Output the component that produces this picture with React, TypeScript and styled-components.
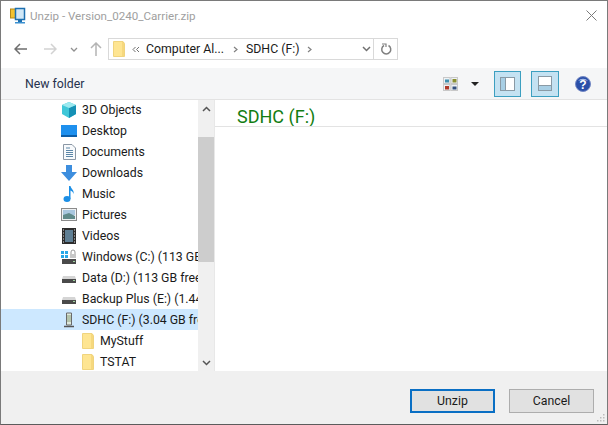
import styled, { createGlobalStyle } from "styled-components";

const Global = createGlobalStyle`
  html, body { margin: 0; padding: 0; background: #fff; }
  * { box-sizing: border-box; }
`;
const Dialog = styled.div`
  position: relative;
  width: 608px;
  height: 425px;
  display: flex;
  flex-direction: column;
  background: #fff;
  border: 1px solid #7a7a7a;
  border-bottom-color: #5c5c5c;
  font-family: "Roboto", sans-serif;
  font-size: 12.3px;
  color: #1a1a1a;
  overflow: hidden;
`;
const TitleBar = styled.div`
  height: 29px;
  flex: none;
  display: flex;
  align-items: center;
  padding: 0 10px 0 9px;
  gap: 4px;
`;
const TitleText = styled.span`
  flex: 1;
  color: #a0a0a0;
  font-size: 11.6px;
`;
const AddressRow = styled.div`
  height: 38px;
  flex: none;
  display: flex;
  align-items: center;
  padding-left: 10px;
`;
const NavButton = styled.div<{ $w: number; $ml?: number }>`
  width: ${(p) => p.$w}px;
  margin-left: ${(p) => p.$ml ?? 0}px;
  height: 22px;
  display: flex;
  align-items: center;
  justify-content: center;
  flex: none;
`;
const AddressBox = styled.div`
  width: 290px;
  height: 22px;
  margin-left: 3px;
  border: 1px solid #d9d9d9;
  display: flex;
  align-items: center;
  padding-left: 4px;
`;
const Crumb = styled.span<{ $ml: number }>`
  margin-left: ${(p) => p.$ml}px;
  white-space: nowrap;
  display: inline-flex;
  align-items: center;
`;
const AddressEnd = styled.div`
  margin-left: auto;
  display: flex;
  align-items: center;
  gap: 2px;
  height: 100%;
`;
const RefreshBox = styled.div`
  width: 24px;
  height: 20px;
  border-left: 1px solid #d9d9d9;
  display: flex;
  align-items: center;
  justify-content: center;
`;
const Toolbar = styled.div`
  height: 32px;
  flex: none;
  display: flex;
  align-items: center;
  background: #f5f6f7;
  border-bottom: 1px solid #e3e3e3;
  padding-left: 24px;
`;
const NewFolder = styled.span`
  color: #26324d;
  flex: 1;
`;
const ToggleButton = styled.div<{ $ml: number; $w: number }>`
  width: ${(p) => p.$w}px;
  height: 26px;
  margin-left: ${(p) => p.$ml}px;
  background: #c4e2f2;
  border: 1px solid #3c9fc0;
  display: flex;
  align-items: center;
  justify-content: center;
`;
const IconSlot = styled.div<{ $ml: number; $mr?: number }>`
  margin-left: ${(p) => p.$ml}px;
  margin-right: ${(p) => p.$mr ?? 0}px;
  display: flex;
  align-items: center;
`;
const Main = styled.div`
  flex: 1;
  display: flex;
  min-height: 0;
`;
const Tree = styled.div`
  width: 197px;
  flex: none;
  overflow: hidden;
`;
const TreeList = styled.div`
  margin-top: -1px;
`;
const TreeRow = styled.div<{ $selected?: boolean; $nested?: boolean }>`
  height: 21px;
  display: flex;
  align-items: center;
  padding-left: ${(p) => (p.$nested ? 79 : 60)}px;
  gap: ${(p) => (p.$nested ? 4 : 5)}px;
  background: ${(p) => (p.$selected ? "#cde8ff" : "transparent")};
  white-space: nowrap;
  overflow: hidden;
`;
const TreeIcon = styled.span`
  width: 16px;
  height: 16px;
  flex: none;
  display: flex;
  align-items: center;
  justify-content: center;
`;
const Scrollbar = styled.div`
  width: 16px;
  flex: none;
  display: flex;
  flex-direction: column;
  background: #f0f0f0;
`;
const ScrollArrow = styled.div`
  height: 17px;
  flex: none;
  display: flex;
  align-items: center;
  justify-content: center;
`;
const ScrollThumb = styled.div`
  height: 125px;
  margin-top: 20px;
  flex: none;
  background: #cdcdcd;
`;
const ScrollTrack = styled.div`
  flex: 1;
`;
const Content = styled.div`
  flex: 1;
  border-left: 1px solid #e8e8e8;
`;
const Heading = styled.div`
  height: 27px;
  padding: 5px 0 0 22px;
  color: #127d12;
  font-size: 18px;
  line-height: 24px;
  border-bottom: 1px solid #e3e3e3;
  overflow: hidden;
`;
const Footer = styled.div`
  height: 53px;
  flex: none;
  background: #f0f0f0;
  display: flex;
  justify-content: flex-end;
  align-items: flex-start;
  padding: 18px 13px 0 0;
  gap: 14px;
`;
const DialogButton = styled.div<{ $primary?: boolean }>`
  width: 85px;
  height: 24px;
  display: flex;
  align-items: center;
  justify-content: center;
  background: #e1e1e1;
  border: ${(p) => (p.$primary ? "2px solid #0a6fc4" : "1px solid #adadad")};
  color: #1a1a1a;
`;
const Grip = styled.div`
  position: absolute;
  right: 2px;
  bottom: 2px;
  line-height: 0;
`;

const Folder = ({ w = 12, h = 16 }: { w?: number; h?: number }) => (
  <svg width={w} height={h} viewBox="0 0 12 16">
    <path d="M0.5 0.5H10L11.5 2.500V15.5H0.5Z" fill="#fee592" stroke="#f0d47e" />
    <path d="M10 1V15" stroke="#eecb6a" />
  </svg>
);
const Drive = () => (
  <svg width="16" height="16" viewBox="0 0 16 16">
    <path d="M2 6H14L15 9H1Z" fill="#d5d5d5" />
    <rect x="1" y="9" width="14" height="4" fill="#4a4a4a" />
    <rect x="12" y="10" width="2" height="1" fill="#9fd29f" />
  </svg>
);
const CrumbArrow = () => (
  <svg width="5" height="7" viewBox="0 0 5 7">
    <path d="M1 1L4 3.500L1 6" stroke="#808080" strokeWidth="1.200" fill="none" />
  </svg>
);

const items = [
  {
    label: "3D Objects",
    icon: (
      <svg width="16" height="16" viewBox="0 0 16 16">
        <path d="M8 0L15 3V12L8 16L1 12V3Z" fill="#3fc7d8" />
        <path d="M8 6L15 3V12L8 16Z" fill="#1590b5" />
        <path d="M8 0L15 3L8 6L1 3Z" fill="#9ce9ef" />
      </svg>
    ),
  },
  {
    label: "Desktop",
    icon: (
      <svg width="16" height="12" viewBox="0 0 16 12">
        <rect width="16" height="12" fill="#1e90ee" />
        <rect y="10" width="16" height="2" fill="#0c5ea8" />
      </svg>
    ),
  },
  {
    label: "Documents",
    icon: (
      <svg width="13" height="16" viewBox="0 0 13 16">
        <path d="M.5.5H9L12.5 4V15.5H.5Z" fill="#f8fafc" stroke="#8a97a5" />
        <path d="M3 4H7M3 6.500H10M3 8.500H10M3 10.500H10M3 12.500H10" stroke="#5c87a8" />
      </svg>
    ),
  },
  {
    label: "Downloads",
    icon: (
      <svg width="16" height="16" viewBox="0 0 16 16">
        <path d="M5 0H11V7H16L8 16L0 7H5Z" fill="#3d8ede" />
      </svg>
    ),
  },
  {
    label: "Music",
    icon: (
      <svg width="12" height="16" viewBox="0 0 12 16">
        <ellipse cx="4" cy="13" rx="3.500" ry="3" fill="#1c8fe6" />
        <path d="M6 0H7.500C8 3 11.500 4 10.500 8C10 5.500 8.500 5 7.500 4.500V13H6Z" fill="#1c8fe6" />
      </svg>
    ),
  },
  {
    label: "Pictures",
    icon: (
      <svg width="16" height="13" viewBox="0 0 16 13">
        <rect x=".5" y=".5" width="15" height="12" fill="#eef1f3" stroke="#8b8b8b" />
        <rect x="2" y="2" width="12" height="5" fill="#a9c7df" />
        <path d="M2 7L8 5L14 8V11H2Z" fill="#5f8a8a" />
      </svg>
    ),
  },
  {
    label: "Videos",
    icon: (
      <svg width="14" height="16" viewBox="0 0 14 16">
        <rect width="14" height="16" fill="#2c2c2c" />
        <rect x="3" y="2" width="8" height="12" fill="#5f7f94" />
        <path d="M1 2H2M1 5H2M1 8H2M1 11H2M1 14H2M12 2H13M12 5H13M12 8H13M12 11H13M12 14H13" stroke="#ddd" />
      </svg>
    ),
  },
  {
    label: "Windows (C:) (113 GB free of 237 GB)",
    icon: (
      <svg width="16" height="16" viewBox="0 0 16 16">
        <path d="M0 2H3V5H0ZM4 2H7V5H4ZM0 6H3V9H0ZM4 6H7V9H4Z" fill="#29a8e8" />
        <path d="M10 5V3A2 2 0 0 1 14 3V5" fill="none" stroke="#999" />
        <rect x="9" y="5" width="6" height="4" fill="#c7c7c7" />
        <rect x="1" y="10" width="14" height="5" fill="#4a4a4a" />
        <rect x="12" y="12" width="2" height="1" fill="#9fd29f" />
      </svg>
    ),
  },
  { label: "Data (D:) (113 GB free of 119 GB)", icon: <Drive /> },
  { label: "Backup Plus (E:) (1.44 TB free of 1.81 TB)", icon: <Drive /> },
  {
    label: "SDHC (F:) (3.04 GB free of 3.68 GB)",
    selected: true,
    icon: (
      <svg width="12" height="16" viewBox="0 0 12 16">
        <path d="M3.500 1H8.500V13H3.500Z" fill="#dfe8dc" stroke="#6a6a6a" />
        <path d="M5 3V10M7 3V10" stroke="#8aa07d" />
        <path d="M1 14.500H11" stroke="#555" strokeWidth="1.500" />
      </svg>
    ),
  },
  { label: "MyStuff", nested: true, icon: <Folder /> },
  { label: "TSTAT", nested: true, icon: <Folder /> },
];

const App = () => {
  return (
    <Dialog>
      <Global />
      <TitleBar>
        <svg width="16" height="17" viewBox="0 0 16 17">
          <rect x="0.500" y="2" width="11" height="9" fill="#f2c230" stroke="#b58a1a" />
          <rect x="5.500" y="1.500" width="9" height="11" fill="#cfe7f7" stroke="#1c6fb0" strokeWidth="1.500" />
          <rect x="8" y="13" width="4" height="2" fill="#1c6fb0" />
          <rect x="5" y="15" width="10" height="1.500" fill="#3b90d0" />
        </svg>
        <TitleText>Unzip - Version_0240_Carrier.zip</TitleText>
        <svg width="11" height="11" viewBox="0 0 11 11">
          <path d="M.5.5L10.500 10.500M10.500.5L.5 10.500" stroke="#7a7a7a" fill="none" />
        </svg>
      </TitleBar>
      <AddressRow>
        <NavButton $w={18}>
          <svg width="13" height="12" viewBox="0 0 13 12">
            <path d="M6 1L1 6L6 11M1 6H13" stroke="#6e6e6e" strokeWidth="1.500" fill="none" />
          </svg>
        </NavButton>
        <NavButton $w={18} $ml={12}>
          <svg width="13" height="12" viewBox="0 0 13 12">
            <path d="M7 1L12 6L7 11M12 6H0" stroke="#d2d2d2" strokeWidth="1.500" fill="none" />
          </svg>
        </NavButton>
        <NavButton $w={17} $ml={6}>
          <svg width="8" height="5" viewBox="0 0 8 5">
            <path d="M1 1L4 4L7 1" stroke="#909090" strokeWidth="1.300" fill="none" />
          </svg>
        </NavButton>
        <NavButton $w={18} $ml={5}>
          <svg width="12" height="14" viewBox="0 0 12 14">
            <path d="M1 6L6 1L11 6M6 1V14" stroke="#b4b4b4" strokeWidth="1.500" fill="none" />
          </svg>
        </NavButton>
        <AddressBox>
          <Folder />
          <Crumb $ml={7}>
            <svg width="8" height="7" viewBox="0 0 8 7">
              <path d="M3.500 1L1 3.500L3.500 6M7 1L4.500 3.500L7 6" stroke="#707070" fill="none" />
            </svg>
          </Crumb>
          <Crumb $ml={6}>Computer Al...</Crumb>
          <Crumb $ml={9}>
            <CrumbArrow />
          </Crumb>
          <Crumb $ml={8}>SDHC (F:)</Crumb>
          <Crumb $ml={8}>
            <CrumbArrow />
          </Crumb>
          <AddressEnd>
            <svg width="9" height="6" viewBox="0 0 9 6">
              <path d="M1 1L4.500 4.500L8 1" stroke="#707070" strokeWidth="1.500" fill="none" />
            </svg>
            <RefreshBox>
              <svg width="12" height="12" viewBox="0 0 12 12">
                <path d="M4 2.500A4.500 4.500 0 1 0 8.500 2.500" stroke="#808080" strokeWidth="1.500" fill="none" />
                <path d="M2 1H6V4" stroke="#808080" strokeWidth="1.200" fill="none" />
              </svg>
            </RefreshBox>
          </AddressEnd>
        </AddressBox>
      </AddressRow>
      <Toolbar>
        <NewFolder>New folder</NewFolder>
        <IconSlot $ml={0}>
          <svg width="15" height="14" viewBox="0 0 15 14">
            <rect x=".5" y=".5" width="6.500" height="6" fill="#eef3f6" stroke="#c8c8c8" />
            <rect x="8" y=".5" width="6.500" height="6" fill="#eef3f6" stroke="#c8c8c8" />
            <rect x=".5" y="7.500" width="6.500" height="6" fill="#eef3f6" stroke="#c8c8c8" />
            <rect x="8" y="7.500" width="6.500" height="6" fill="#eef3f6" stroke="#c8c8c8" />
            <rect x="2" y="2.500" width="4" height="3" fill="#3f8fae" />
            <rect x="9.500" y="2" width="4" height="3.500" fill="#8a8f30" />
            <rect x="2" y="9" width="4" height="3.500" fill="#b03a2a" />
            <rect x="9.500" y="9.500" width="4" height="3" fill="#34507e" />
          </svg>
        </IconSlot>
        <IconSlot $ml={13}>
          <svg width="8" height="4" viewBox="0 0 8 4">
            <path d="M0 0H8L4 4Z" fill="#222" />
          </svg>
        </IconSlot>
        <ToggleButton $ml={15} $w={27}>
          <svg width="15" height="14" viewBox="0 0 15 14">
            <rect x=".5" y=".5" width="14" height="13" fill="#fff" stroke="#8a9aa5" />
            <rect x="1" y="1" width="4" height="12" fill="#a8cfe5" />
            <path d="M5.500 1V13" stroke="#8a9aa5" />
          </svg>
        </ToggleButton>
        <ToggleButton $ml={10} $w={28}>
          <svg width="14" height="15" viewBox="0 0 14 15">
            <rect x=".5" y=".5" width="13" height="14" fill="#fff" stroke="#8a9aa5" />
            <rect x="1" y="10" width="12" height="4" fill="#a8cfe5" />
            <path d="M1 9.500H13" stroke="#8a9aa5" />
          </svg>
        </ToggleButton>
        <IconSlot $ml={16} $mr={16}>
          <svg width="16" height="16" viewBox="0 0 16 16">
            <circle cx="8" cy="8" r="7.500" fill="#2a4fa8" stroke="#7388c4" />
            <path d="M3 5A6 5 0 0 1 13 5A8 4 0 0 0 3 5Z" fill="#a8bde8" />
            <text x="8" y="12.500" textAnchor="middle" fontSize="12" fontWeight="700" fill="#fff" fontFamily="Liberation Sans">?</text>
          </svg>
        </IconSlot>
      </Toolbar>
      <Main>
        <Tree>
          <TreeList>
            {items.map((item) => (
              <TreeRow key={item.label} $selected={item.selected} $nested={item.nested}>
                <TreeIcon>{item.icon}</TreeIcon>
                {item.label}
              </TreeRow>
            ))}
          </TreeList>
        </Tree>
        <Scrollbar>
          <ScrollArrow>
            <svg width="9" height="6" viewBox="0 0 9 6">
              <path d="M1 5L4.500 1.500L8 5" stroke="#555" strokeWidth="1.500" fill="none" />
            </svg>
          </ScrollArrow>
          <ScrollThumb />
          <ScrollTrack />
          <ScrollArrow>
            <svg width="9" height="6" viewBox="0 0 9 6">
              <path d="M1 1L4.500 4.500L8 1" stroke="#555" strokeWidth="1.500" fill="none" />
            </svg>
          </ScrollArrow>
        </Scrollbar>
        <Content>
          <Heading>SDHC (F:)</Heading>
        </Content>
      </Main>
      <Footer>
        <DialogButton $primary>Unzip</DialogButton>
        <DialogButton>Cancel</DialogButton>
      </Footer>
      <Grip>
        <svg width="8" height="8" viewBox="0 0 8 8">
          <path d="M6 0H7.500V1.500H6ZM3 3H4.500V4.500H3ZM6 3H7.500V4.500H6ZM0 6H1.500V7.500H0ZM3 6H4.500V7.500H3ZM6 6H7.500V7.500H6Z" fill="#bdbdbd" />
        </svg>
      </Grip>
    </Dialog>
  );
};

export default App;
